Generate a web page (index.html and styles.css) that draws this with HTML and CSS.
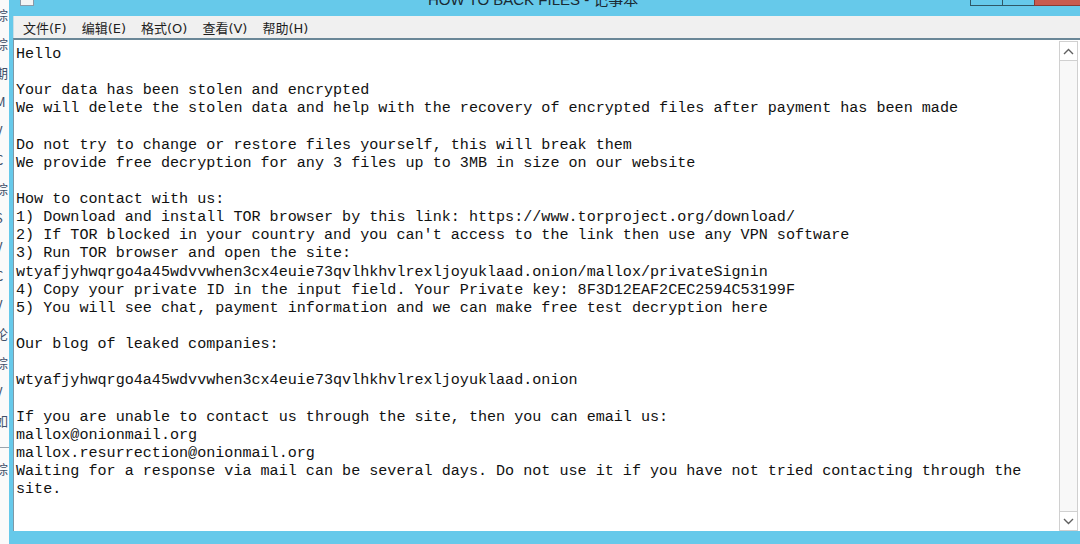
FILE: index.html
```html
<!DOCTYPE html>
<html lang="zh-CN">
<head>
    <meta charset="UTF-8">
    <title>HOW TO BACK FILES - 记事本</title>
    <link rel="stylesheet" href="styles.css">
</head>
<body>
    <div class="screen">
        <div class="desktop">
            <span>综</span><span>综</span><span>期</span><span>M</span><span>V</span><span>C</span>
            <span>综</span><span>S</span><span>V</span><span>C</span><span>V</span><span>论</span>
            <span>综</span><span>V</span><span>如</span><span class="rule"></span><span>综</span>
        </div>
        <div class="window">
            <div class="titlebar">
                <span class="app-icon"></span>
                <span class="title">HOW TO BACK FILES - 记事本</span>
                <div class="caption-buttons">
                    <span class="cap-btn"></span>
                    <span class="cap-btn"></span>
                    <span class="cap-btn close"></span>
                </div>
            </div>
            <div class="menubar">
                <span>文件(F)</span>
                <span>编辑(E)</span>
                <span>格式(O)</span>
                <span>查看(V)</span>
                <span>帮助(H)</span>
            </div>
            <div class="editor">
<pre class="text">Hello

Your data has been stolen and encrypted
We will delete the stolen data and help with the recovery of encrypted files after payment has been made

Do not try to change or restore files yourself, this will break them
We provide free decryption for any 3 files up to 3MB in size on our website

How to contact with us:
1) Download and install TOR browser by this link: https://www.torproject.org/download/
2) If TOR blocked in your country and you can't access to the link then use any VPN software
3) Run TOR browser and open the site:
wtyafjyhwqrgo4a45wdvvwhen3cx4euie73qvlhkhvlrexljoyuklaad.onion/mallox/privateSignin
4) Copy your private ID in the input field. Your Private key: 8F3D12EAF2CEC2594C53199F
5) You will see chat, payment information and we can make free test decryption here

Our blog of leaked companies:

wtyafjyhwqrgo4a45wdvvwhen3cx4euie73qvlhkhvlrexljoyuklaad.onion

If you are unable to contact us through the site, then you can email us:
mallox@onionmail.org
mallox.resurrection@onionmail.org
Waiting for a response via mail can be several days. Do not use it if you have not tried contacting through the
site.</pre>
                <div class="scrollbar">
                    <div class="arrow">
                        <svg width="11" height="7" viewBox="0 0 11 7"><path d="M1 6 L5.5 1.5 L10 6" fill="none" stroke="#606060" stroke-width="1.4"/></svg>
                    </div>
                    <div class="track"></div>
                    <div class="arrow">
                        <svg width="11" height="7" viewBox="0 0 11 7"><path d="M1 1 L5.5 5.5 L10 1" fill="none" stroke="#606060" stroke-width="1.4"/></svg>
                    </div>
                </div>
            </div>
            <div class="frame-bottom"></div>
        </div>
    </div>
</body>
</html>
```

FILE: styles.css
```css
html, body {
    margin: 0;
    padding: 0;
    width: 1080px;
    height: 544px;
    overflow: hidden;
    background-color: #ffffff;
}
.screen {
    display: flex;
    height: 544px;
}
.desktop {
    width: 9px;
    flex-shrink: 0;
    overflow: hidden;
    display: flex;
    flex-direction: column;
    padding-top: 6px;
    gap: 12px;
    background-color: #fafafa;
    font-family: "Noto Sans CJK SC", "Liberation Sans", sans-serif;
    font-size: 13px;
    line-height: 17px;
    color: #40506a;
}
.desktop span {
    display: block;
    margin-left: -5px;
    height: 17px;
}
.desktop .rule {
    height: 1px;
    margin: 6px 0 0 0;
    background-color: #9aa4ad;
}
.window {
    flex: 1;
    display: flex;
    flex-direction: column;
    background-color: #66c9ea;
    padding-left: 4px;
}
.titlebar {
    height: 16px;
    position: relative;
    flex-shrink: 0;
}
.app-icon {
    position: absolute;
    left: 7px;
    top: -8px;
    width: 12px;
    height: 12px;
    background-color: #f4f4f4;
    border: 1px solid #8a9aa8;
}
.title {
    position: absolute;
    left: 415px;
    top: -12px;
    font-family: "Liberation Sans", "Noto Sans CJK SC", sans-serif;
    font-size: 15px;
    color: #1a2a33;
    white-space: nowrap;
}
.caption-buttons {
    position: absolute;
    right: -6px;
    top: 0;
    display: flex;
}
.cap-btn {
    width: 31px;
    height: 5px;
    border: 1px solid #2f5766;
    border-top: none;
    margin-left: -1px;
    background-color: #66c9ea;
}
.cap-btn.close {
    width: 50px;
    background-color: #c85a4e;
    border-color: #8a3a32;
}
.menubar {
    height: 22px;
    display: flex;
    align-items: center;
    gap: 15px;
    padding-left: 9px;
    background-color: #f0f0f0;
    border-left: 1px solid #c8dde6;
    font-family: "DejaVu Sans", "Noto Sans CJK SC", sans-serif;
    font-size: 13px;
    color: #1e1e1e;
    flex-shrink: 0;
}
.editor {
    flex: 1;
    display: flex;
    background-color: #ffffff;
    border-top: 2px solid #6a8797;
    border-left: 1px solid #7f98a6;
    min-height: 0;
}
.text {
    flex: 1;
    margin: 0;
    padding: 5px 0 0 2px;
    font-family: "Liberation Mono", "DejaVu Sans Mono", monospace;
    font-size: 15.1px;
    line-height: 18.12px;
    color: #111111;
    white-space: pre;
    overflow: hidden;
}
.scrollbar {
    width: 17px;
    margin: 1px 2px 0 0;
    display: flex;
    flex-direction: column;
    border: 1px solid #d0d0d0;
    background-color: #ffffff;
}
.arrow {
    height: 18px;
    display: flex;
    align-items: center;
    justify-content: center;
    border-bottom: 1px solid #d0d0d0;
}
.arrow:last-child {
    border-bottom: none;
    border-top: 1px solid #d0d0d0;
}
.track {
    flex: 1;
    background-color: #f8f8f8;
}
.frame-bottom {
    height: 13px;
    flex-shrink: 0;
}
```
